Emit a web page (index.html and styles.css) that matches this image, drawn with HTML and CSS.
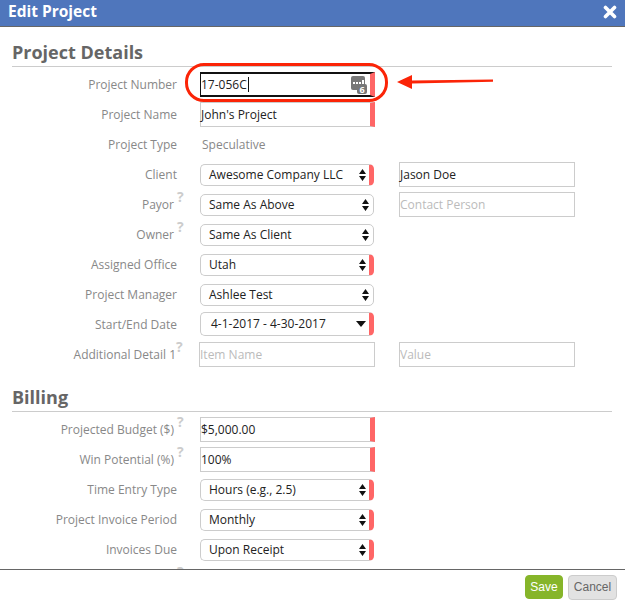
FILE: index.html
```html
<!DOCTYPE html>
<html lang="en">
<head>
<meta charset="utf-8">
<title>Edit Project</title>
<link rel="stylesheet" href="styles.css">
</head>
<body>
<div class="dialog">
  <header class="titlebar">
    <span class="title">Edit Project</span>
    <svg class="close" width="14" height="14" viewBox="0 0 14 14"><path d="M2.5 2.5L11.500 11.500M11.500 2.500L2.500 11.500" stroke="#fff" stroke-width="3.600" stroke-linecap="round"/></svg>
  </header>
  <main class="content">
    <h2 class="section">Project Details</h2>
    <div class="row">
      <label class="label">Project Number</label>
      <div class="input focused required">17-056C<span class="caret"></span>
        <svg class="chat" width="16" height="18" viewBox="0 0 16 18"><rect x="0" y="0" width="14" height="14" rx="2" fill="#777"/><rect x="2" y="6" width="2" height="2" fill="#fff"/><rect x="5" y="6" width="2" height="2" fill="#fff"/><rect x="8" y="6" width="2" height="2" fill="#fff"/><rect x="11" y="4" width="2" height="4" fill="#fff"/><rect x="6" y="8" width="10" height="10" rx="2" fill="#777"/><text x="11" y="16.500" text-anchor="middle" class="chat-count">6</text></svg>
      </div>
    </div>
    <div class="row">
      <label class="label">Project Name</label>
      <div class="input required">John's Project</div>
    </div>
    <div class="row">
      <label class="label">Project Type</label>
      <div class="static">Speculative</div>
    </div>
    <div class="row">
      <label class="label">Client</label>
      <div class="select required">Awesome Company LLC<svg class="updown" width="7" height="12" viewBox="0 0 7 12"><path d="M3.500 0L7 5H0ZM3.500 12L0 7H7Z" fill="#111"/></svg></div>
      <div class="input side">Jason Doe</div>
    </div>
    <div class="row">
      <label class="label has-help">Payor<span class="help">?</span></label>
      <div class="select">Same As Above<svg class="updown" width="7" height="12" viewBox="0 0 7 12"><path d="M3.500 0L7 5H0ZM3.500 12L0 7H7Z" fill="#111"/></svg></div>
      <div class="input side placeholder">Contact Person</div>
    </div>
    <div class="row">
      <label class="label has-help">Owner<span class="help">?</span></label>
      <div class="select">Same As Client<svg class="updown" width="7" height="12" viewBox="0 0 7 12"><path d="M3.500 0L7 5H0ZM3.500 12L0 7H7Z" fill="#111"/></svg></div>
    </div>
    <div class="row">
      <label class="label">Assigned Office</label>
      <div class="select required">Utah<svg class="updown" width="7" height="12" viewBox="0 0 7 12"><path d="M3.500 0L7 5H0ZM3.500 12L0 7H7Z" fill="#111"/></svg></div>
    </div>
    <div class="row">
      <label class="label">Project Manager</label>
      <div class="select">Ashlee Test<svg class="updown" width="7" height="12" viewBox="0 0 7 12"><path d="M3.500 0L7 5H0ZM3.500 12L0 7H7Z" fill="#111"/></svg></div>
    </div>
    <div class="row">
      <label class="label">Start/End Date</label>
      <div class="select date required">4-1-2017 - 4-30-2017<svg class="caret-down" width="10" height="6" viewBox="0 0 10 6"><path d="M0 0H10L5 6Z" fill="#111"/></svg></div>
    </div>
    <div class="row">
      <label class="label has-help">Additional Detail 1<span class="help help-tight">?</span></label>
      <div class="input wide placeholder">Item Name</div>
      <div class="input side placeholder">Value</div>
    </div>

    <h2 class="section section-next">Billing</h2>
    <div class="row">
      <label class="label has-help">Projected Budget ($)<span class="help">?</span></label>
      <div class="input required">$5,000.00</div>
    </div>
    <div class="row">
      <label class="label has-help">Win Potential (%)<span class="help">?</span></label>
      <div class="input required">100%</div>
    </div>
    <div class="row">
      <label class="label">Time Entry Type</label>
      <div class="select required">Hours (e.g., 2.5)<svg class="updown" width="7" height="12" viewBox="0 0 7 12"><path d="M3.500 0L7 5H0ZM3.500 12L0 7H7Z" fill="#111"/></svg></div>
    </div>
    <div class="row">
      <label class="label">Project Invoice Period</label>
      <div class="select required">Monthly<svg class="updown" width="7" height="12" viewBox="0 0 7 12"><path d="M3.500 0L7 5H0ZM3.500 12L0 7H7Z" fill="#111"/></svg></div>
    </div>
    <div class="row">
      <label class="label">Invoices Due</label>
      <div class="select required">Upon Receipt<svg class="updown" width="7" height="12" viewBox="0 0 7 12"><path d="M3.500 0L7 5H0ZM3.500 12L0 7H7Z" fill="#111"/></svg></div>
    </div>
    <div class="row">
      <label class="label has-help"><span class="help">?</span></label>
    </div>
  </main>
  <footer class="footer">
    <button class="btn save">Save</button>
    <button class="btn cancel">Cancel</button>
  </footer>

  <div class="callout"></div>
  <svg class="arrow" width="100" height="16" viewBox="0 0 100 16"><path d="M0 8L15 1V6.500L96 5.500V7.800L15 9.500V15Z" fill="#fb2407"/></svg>
</div>
</body>
</html>
```

FILE: styles.css
```css
* { box-sizing: border-box; }
html, body { margin: 0; padding: 0; }
body { font-family: "Open Sans", sans-serif; font-size: 12px; color: #222; background: #fff; }

.dialog { position: relative; width: 625px; height: 604px; display: flex; flex-direction: column; overflow: hidden; }

.titlebar { flex: none; height: 27px; background: #4f76bc; border-bottom: 1px solid #666; display: flex; align-items: center; justify-content: space-between; padding: 0 8px 4px 8px; }
.title { color: #fff; font-size: 15.5px; font-weight: 700; }
.close { display: block; margin-top: 2px; }

.content { flex: 1; min-height: 0; overflow: hidden; padding: 12px 13px 0 12px; }

.section { margin: 0 0 3px; height: 28px; font-size: 18px; line-height: 26px; font-weight: 700; color: #666; border-bottom: 1px solid #ccc; }
.section-next { margin-top: 14px; }

.row { height: 30px; display: flex; align-items: center; }

.label { flex: none; width: 173px; min-height: 16px; margin-right: 15px; padding-right: 8px; text-align: right; color: #888; line-height: 16px; white-space: nowrap; }
.label.has-help { padding-right: 0; }
.help { display: inline-block; width: 8px; height: 16px; margin: -5px 0 0 3px; font-size: 14px; line-height: 10px; font-weight: 700; color: #ccc; vertical-align: top; text-align: left; }
.help-tight { width: 9px; margin-left: 0; }

.input { position: relative; flex: none; width: 175px; height: 25px; margin-right: 24px; margin-bottom: 1px; border: 1px solid #ccc; padding-left: 0; line-height: 23px; color: #222; background: #fff; }
.input.wide { width: 176px; margin-left: -1px; }
.input.side { width: 176px; padding-left: 0; }
.input.required { border-right: 5px solid #ff6666; }
.input.focused { border-top: 2px solid #111; border-bottom: 2px solid #111; border-left: 1px solid #111; line-height: 21px; }
.placeholder { color: #bbb; }

.caret { display: inline-block; width: 1px; height: 15px; background: #111; vertical-align: -3px; margin-left: 1px; }
.chat { position: absolute; right: 3px; top: 2px; }
.chat-count { font-size: 9px; font-weight: 700; fill: #fff; }

.static { margin-left: 2px; margin-bottom: 2px; color: #888; }

.select { position: relative; flex: none; width: 174px; height: 22px; margin-right: 25px; border: 1px solid #ccc; border-radius: 5px; padding: 0 4px 2px 8px; display: flex; align-items: center; justify-content: space-between; color: #222; background: #fff; }
.select.required { border-right: 5px solid #ff6666; padding-right: 3px; }
.select.date { height: 24px; margin-bottom: 2px; padding-left: 10px; padding-right: 3px; }
.updown { display: block; flex: none; margin-top: 2px; }
.caret-down { display: block; flex: none; margin-top: 2px; }

.footer { flex: none; height: 35px; border-top: 1px solid #666; background: #fff; display: flex; justify-content: flex-end; align-items: center; gap: 5px; padding-right: 8px; position: relative; }
.btn { font-family: "Liberation Sans", Arial, sans-serif; font-size: 12px; height: 24px; padding: 0; border-radius: 4px; }
.save { width: 38px; background: #86b52a; color: #fff; border: 1px solid #86b52a; }
.cancel { width: 49px; height: 25px; background: #e2e2e2; color: #666; border: 1px solid #ccc; }

.callout { position: absolute; left: 185px; top: 63px; width: 203px; height: 39px; border: 3px solid #fb2407; border-radius: 19px; }
.arrow { position: absolute; left: 397px; top: 74px; }
```
